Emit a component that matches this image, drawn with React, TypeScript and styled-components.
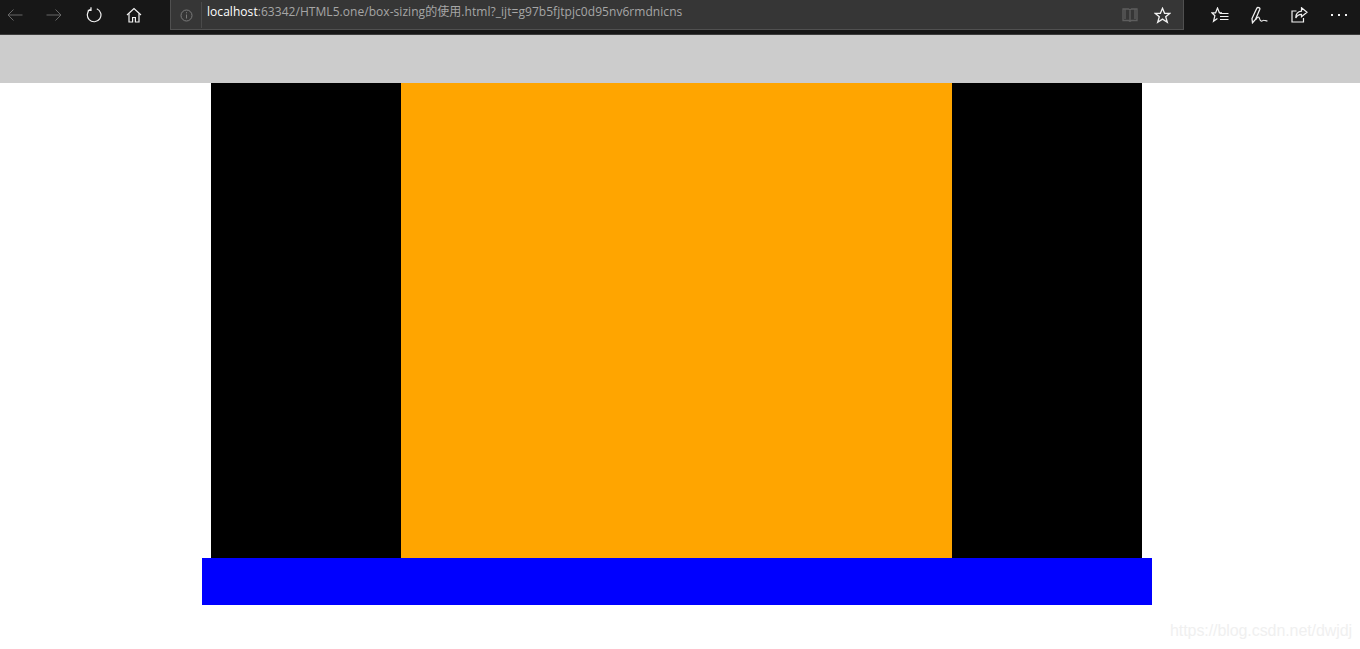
import React from 'react';
import styled, { createGlobalStyle } from 'styled-components';

const GlobalStyle = createGlobalStyle`
  html, body {
    margin: 0;
    padding: 0;
    background: #fff;
    font-family: "Open Sans", "Noto Sans CJK SC", sans-serif;
  }
`;

const Page = styled.div`
  position: relative;
  width: 1360px;
  height: 649px;
  overflow: hidden;
`;

const Toolbar = styled.div`
  height: 34px;
  background: #171717;
  border-bottom: 1px solid #3c3c3c;
  display: flex;
  align-items: flex-start;
`;

const NavGroup = styled.div`
  width: 170px;
  height: 30px;
  flex: none;
  display: flex;
`;

const IconSlot = styled.div<{ $width: number }>`
  width: ${(p) => p.$width}px;
  height: 30px;
  flex: none;
  display: flex;
  align-items: center;
  justify-content: center;

  svg {
    display: block;
  }
`;

const AddressBar = styled.div`
  width: 1014px;
  height: 30px;
  box-sizing: border-box;
  flex: none;
  background: #363636;
  border: 1px solid #505050;
  border-top: none;
  display: flex;
  align-items: flex-start;
`;

const InfoSlot = styled.div`
  width: 31px;
  height: 26px;
  margin-top: 2px;
  flex: none;
  border-right: 1px solid #4a4a4a;
  display: flex;
  align-items: center;
  justify-content: center;
  padding-top: 1px;
  box-sizing: border-box;
`;

const Url = styled.div`
  flex: 1;
  padding-left: 5px;
  height: 26px;
  line-height: 24px;
  font-size: 12px;
  letter-spacing: 0.05px;
  white-space: nowrap;
  color: #a6a6a6;

  strong {
    font-weight: 400;
    color: #fff;
  }
`;

const AddressActions = styled.div`
  display: flex;
  flex: none;
  padding-right: 5px;
`;

const RightTools = styled.div`
  display: flex;
  flex: none;
  padding-left: 17px;
`;

const GreyBand = styled.div`
  height: 48px;
  background: #cccccc;
`;

const Stage = styled.div`
  padding-left: 202px;
`;

const OuterBox = styled.div`
  width: 931px;
  height: 475px;
  margin-left: 9px;
  background: #000;
  display: flex;
  justify-content: center;
`;

const InnerBox = styled.div`
  width: 551px;
  height: 475px;
  background: orange;
`;

const BlueBar = styled.div`
  width: 950px;
  height: 47px;
  background: #0000ff;
`;

const Watermark = styled.div`
  position: absolute;
  right: 8px;
  top: 622px;
  font-family: "Liberation Sans", Arial, sans-serif;
  font-size: 16px;
  letter-spacing: -0.08px;
  line-height: 18px;
  color: #f0f0f0;
  white-space: nowrap;
`;

const App = () => (
  <Page>
    <GlobalStyle />
    <Toolbar>
      <NavGroup>
        <IconSlot $width={30}>
          <svg width="16" height="12" viewBox="0 0 16 12" fill="none" stroke="#666666" strokeWidth="1">
            <path d="M15.500 6H1M6.500 .5L1 6l5.500 5.500" />
          </svg>
        </IconSlot>
        <IconSlot $width={48}>
          <svg width="16" height="12" viewBox="0 0 16 12" fill="none" stroke="#666666" strokeWidth="1">
            <path d="M.5 6H15M9.500 .5L15 6l-5.500 5.500" />
          </svg>
        </IconSlot>
        <IconSlot $width={32}>
          <svg width="16" height="16" viewBox="0 0 16 16" fill="none" stroke="#f2f2f2" strokeWidth="1.2">
            <path d="M4.700 2.100A6.800 6.800 0 1 0 10.800 1.700" />
            <path d="M5 .3v3H1.800" />
          </svg>
        </IconSlot>
        <IconSlot $width={48}>
          <svg width="16" height="16" viewBox="0 0 16 16" fill="none" stroke="#f2f2f2" strokeWidth="1.2">
            <path d="M1 8l7-6.500L15 8" />
            <path d="M3 6.500V15h3.600v-4.500h2.800V15H13V6.500" />
          </svg>
        </IconSlot>
      </NavGroup>
      <AddressBar>
        <InfoSlot>
          <svg width="13" height="13" viewBox="0 0 13 13" fill="none" stroke="#7b7b7b" strokeWidth="1">
            <circle cx="6.500" cy="6.500" r="5.500" />
            <path d="M6.500 5.500v4M6.500 3.200v1.100" />
          </svg>
        </InfoSlot>
        <Url>
          <strong>localhost</strong>:63342/HTML5.one/box-sizing的使用.html?_ijt=g97b5fjtpjc0d95nv6rmdnicns
        </Url>
        <AddressActions>
          <IconSlot $width={32}>
            <svg width="16" height="14" viewBox="0 0 16 14" fill="none" stroke="#5e5e5e" strokeWidth="1.3">
              <path d="M1 1h5.500L8 2l1.500-1H15v11.500H9.500L8 13.500l-1.500-1H1zM8 2v11.500M3 1v10M13 1v10" />
            </svg>
          </IconSlot>
          <IconSlot $width={32}>
            <svg width="17" height="17" viewBox="0 0 17 17" fill="none" stroke="#f2f2f2" strokeWidth="1.3">
              <path d="M8.500 1.300l2.100 5h5.300l-4.200 3.400 1.600 5.600-4.800-3.200-4.800 3.200 1.600-5.600L1.100 6.300h5.300z" />
            </svg>
          </IconSlot>
        </AddressActions>
      </AddressBar>
      <RightTools>
        <IconSlot $width={38}>
          <svg width="18" height="17" viewBox="0 0 18 17" fill="none" stroke="#f2f2f2" strokeWidth="1.2">
            <path d="M11 5.800H8.400L6.500 1 4.600 5.800H.8l3.100 2.900-1.400 5.600 3.900-2.800" />
            <path d="M9 6.500h8.500M9 9.500h8.500M9 12.500h8.500" />
          </svg>
        </IconSlot>
        <IconSlot $width={40}>
          <svg width="17" height="18" viewBox="0 0 17 18" fill="none" stroke="#f0f0f0" strokeWidth="1.3">
            <path d="M1.500 16.800L1 12.500 5.800 2.300c.7-1.500 3.600-.7 3 1L4.500 13.500l-3 3.300z" />
            <path d="M5 13.500c.7-1.500 1.700-3 2.800-2.300 1 .7.800 3.300 2.200 3.800 1.500.5 1.800-1 3-.8 1 .1 1.800.8 3.500.8" strokeWidth="1.100" />
          </svg>
        </IconSlot>
        <IconSlot $width={40}>
          <svg width="17" height="16" viewBox="0 0 17 16" fill="none" stroke="#f2f2f2" strokeWidth="1.2">
            <path d="M5.500 4H1v11h11.500v-4" />
            <path d="M10.500 .8L16 5.300l-5.500 4.500V7.400C7.800 7.400 6 8.700 4.800 11c0-4 2.400-6.500 5.700-6.800z" />
          </svg>
        </IconSlot>
        <IconSlot $width={40}>
          <svg width="16" height="4" viewBox="0 0 16 4" fill="#f2f2f2">
            <rect x="0" y="1" width="2" height="2" />
            <rect x="7" y="1" width="2" height="2" />
            <rect x="14" y="1" width="2" height="2" />
          </svg>
        </IconSlot>
      </RightTools>
    </Toolbar>
    <GreyBand />
    <Stage>
      <OuterBox>
        <InnerBox />
      </OuterBox>
      <BlueBar />
    </Stage>
    <Watermark>https://blog.csdn.net/dwjdj</Watermark>
  </Page>
);

export default App;
